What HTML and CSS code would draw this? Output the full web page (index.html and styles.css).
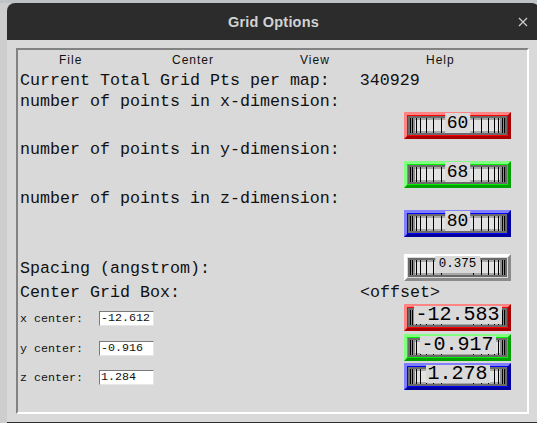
FILE: index.html
```html
<!DOCTYPE html>
<html>
<head>
<meta charset="utf-8">
<link rel="stylesheet" href="styles.css">
</head>
<body>
<svg class="defs" width="0" height="0" aria-hidden="true">
  <defs>
    <symbol id="drum" viewBox="0 0 95 15" preserveAspectRatio="none">
      <rect width="95" height="15" fill="#e2e2e2"/>
      <rect width="95" height="2" fill="#a8a8a8"/>
      <rect y="13" width="95" height="2" fill="#a8a8a8"/>
      <rect width="5" height="15" fill="#8e8e8e"/>
      <rect x="90" width="5" height="15" fill="#8e8e8e"/>
      <rect x="36" y="2" width="23" height="11" fill="#ffffff"/>
      <path d="M0.5 0V15M2.5 0V15M6.5 0V15M10.5 0V15M16.5 0V15M23.5 0V15M31.5 0V15M63.5 0V15M71.5 0V15M78.5 0V15M84.5 0V15M88.5 0V15M92.5 0V15M94.5 0V15" stroke="#000" stroke-width="1" fill="none"/>
    </symbol>
  </defs>
</svg>
<div class="window">
  <div class="titlebar">
    <span class="title">Grid Options</span>
    <svg class="close" width="10" height="10" viewBox="0 0 10 10"><path d="M1 1L9 9M9 1L1 9" stroke="#cfcfcf" stroke-width="1.2" fill="none"/></svg>
  </div>
  <div class="client">
    <div class="panel">
      <div class="menubar"><span>File</span><span>Center</span><span>View</span><span>Help</span></div>
      <div class="line">Current Total Grid Pts per map:   340929</div>
      <div class="line">number of points in x-dimension:</div>
      <div class="wheel red first"><svg class="drum"><use href="#drum" width="100%" height="100%"/></svg><span class="val big2">60</span></div>
      <div class="line">number of points in y-dimension:</div>
      <div class="wheel green"><svg class="drum"><use href="#drum" width="100%" height="100%"/></svg><span class="val big2">68</span></div>
      <div class="line">number of points in z-dimension:</div>
      <div class="wheel blue"><svg class="drum"><use href="#drum" width="100%" height="100%"/></svg><span class="val big2">80</span></div>

      <div class="row spacing">
        <span class="text">Spacing (angstrom):</span>
        <div class="wheel gray"><svg class="drum"><use href="#drum" width="100%" height="100%"/></svg><span class="val tiny">0.375</span></div>
      </div>
      <div class="line center-head"><span class="head-left">Center Grid Box:</span><span>&lt;offset&gt;</span></div>

      <div class="coord c-x">
        <span class="small">x center:</span>
        <span class="entry">-12.612</span>
        <div class="wheel red"><svg class="drum"><use href="#drum" width="100%" height="100%"/></svg><span class="val big">-12.583</span></div>
      </div>
      <div class="coord c-y">
        <span class="small">y center:</span>
        <span class="entry">-0.916</span>
        <div class="wheel green"><svg class="drum"><use href="#drum" width="100%" height="100%"/></svg><span class="val big">-0.917</span></div>
      </div>
      <div class="coord c-z">
        <span class="small">z center:</span>
        <span class="entry">1.284</span>
        <div class="wheel blue"><svg class="drum"><use href="#drum" width="100%" height="100%"/></svg><span class="val big">1.278</span></div>
      </div>
    </div>
  </div>
</div>
</body>
</html>
```
FILE: styles.css
```css
html, body {
  margin: 0;
}
body {
  width: 537px;
  height: 423px;
  overflow: hidden;
  box-sizing: border-box;
  padding: 3px 0 0 7px;
  background: linear-gradient(to bottom, #bfc3c8 0, #bfc3c8 3px, #cdcdcd 3px);
}
.defs {
  position: absolute;
  width: 0;
  height: 0;
}
.window {
  width: 533px;
  border-radius: 8px 8px 0 0;
  overflow: hidden;
}
.titlebar {
  height: 37px;
  background: #2c2c2c;
  display: flex;
  align-items: center;
  justify-content: center;
  position: relative;
}
.title {
  font: bold 14.5px "Liberation Sans", Arial, sans-serif;
  color: #d2d2d2;
  letter-spacing: 0.2px;
}
.close {
  position: absolute;
  right: 12px;
  top: 14px;
}
.client {
  background: #d9d9d9;
  height: 383px;
  box-sizing: border-box;
  border-bottom: 1px solid #2e2e2e;
  padding: 8px 0 0 9px;
}
.panel {
  width: 513px;
  height: 366px;
  box-sizing: border-box;
  border: 2px solid;
  border-color: #828282 #ffffff #ffffff #828282;
  padding: 0 16px 0 2px;
  display: flex;
  flex-direction: column;
  color: #111;
}
.menubar {
  height: 20px;
  display: grid;
  grid-template-columns: 113px 128px 126px auto;
  padding-left: 39px;
  align-items: center;
  font: 12px "Liberation Sans", Arial, sans-serif;
  letter-spacing: 1px;
}
.line, .text {
  font: 16.67px/20px "Liberation Mono", "DejaVu Sans Mono", monospace;
  white-space: pre;
}
.line {
  height: 20px;
  margin-top: 1px;
}
.wheel {
  align-self: flex-end;
  position: relative;
  width: 107px;
  height: 27px;
  box-sizing: border-box;
  border: 3px solid;
  padding: 1px;
  margin-top: 1px;
}
.wheel.first {
  margin-top: 0;
}
.red {
  background: #ff0000;
  border-color: #ff8585 #a80000 #a80000 #ff8585;
}
.green {
  background: #00f000;
  border-color: #80ff80 #00a000 #00a000 #80ff80;
}
.blue {
  background: #0000ff;
  border-color: #8080ff #0000a0 #0000a0 #8080ff;
}
.gray {
  background: #d9d9d9;
  border-color: #ffffff #8a8a8a #8a8a8a #ffffff;
}
.drum {
  display: block;
  width: 95px;
  height: 15px;
  border: 2px solid #6a6a6a;
}
.val {
  position: absolute;
  left: 50%;
  transform: translateX(-50%);
  background: #d9d9d9;
  font-family: "Liberation Mono", "DejaVu Sans Mono", monospace;
  white-space: pre;
  text-align: center;
  color: #000;
}
.big2 {
  top: -2px;
  font-size: 18px;
  line-height: 20px;
  padding: 0 2px;
}
.big {
  top: -1px;
  font-size: 20px;
  line-height: 18px;
  padding: 0 2px;
}
.tiny {
  top: -1px;
  font-size: 12.5px;
  line-height: 17px;
  padding: 0 4px;
}
.row {
  display: flex;
  align-items: center;
  justify-content: space-between;
}
.row .wheel {
  margin-top: 0;
}
.spacing {
  margin-top: 17px;
}
.spacing .text {
  padding-top: 3px;
}
.center-head {
  margin-top: 2px;
  display: flex;
}
.head-left {
  width: 340px;
}
.coord {
  display: flex;
  align-items: center;
}
.coord .wheel {
  margin-left: auto;
  margin-top: 0;
}
.c-x { margin-top: 1px; }
.c-y { margin-top: 3px; }
.c-z { margin-top: 2px; }
.small {
  width: 79px;
  font: 11.67px/14px "Liberation Mono", "DejaVu Sans Mono", monospace;
  white-space: pre;
  padding-top: 2px;
}
.entry {
  width: 52px;
  height: 13px;
  background: #ffffff;
  border: 1px solid;
  border-color: #7a7a7a #e6e6e6 #e6e6e6 #7a7a7a;
  font: 11.67px/13px "Liberation Mono", "DejaVu Sans Mono", monospace;
  padding-left: 1px;
  margin-top: 2px;
}
```
